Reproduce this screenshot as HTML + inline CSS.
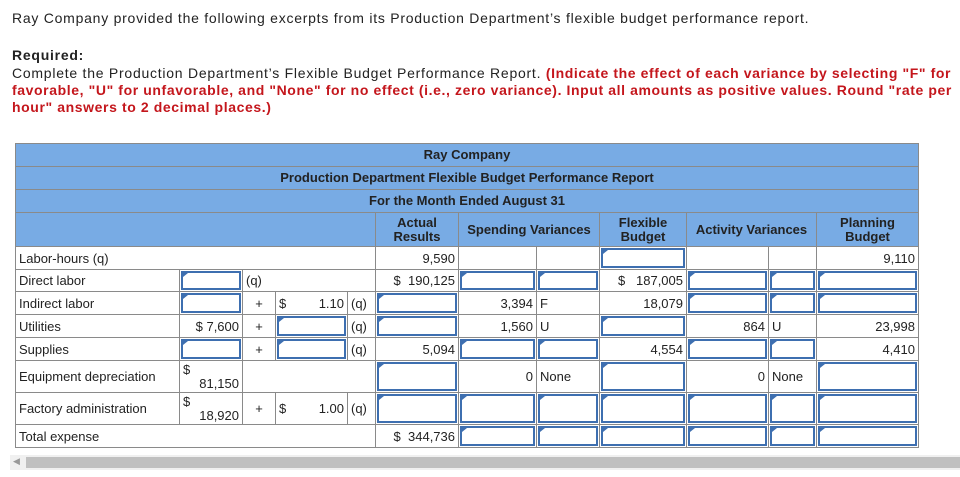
<!DOCTYPE html>
<html><head><meta charset="utf-8"><style>
body{margin:0;width:960px;height:477px;background:#fff;font-family:"Liberation Sans",Arial,sans-serif;color:#222;position:relative;overflow:hidden}
.t{position:absolute;left:12px;font-size:14px;line-height:17px;white-space:nowrap;letter-spacing:0.75px}
.r{color:#c4161c;font-weight:bold;letter-spacing:0.6px}
table{position:absolute;left:15px;top:143px;border-collapse:collapse;table-layout:fixed;font-size:13px}
td{border:1px solid #8a8a8a;padding:0 3px;white-space:nowrap;overflow:hidden;position:relative}
.h td{background:#78abe4;font-weight:bold;text-align:center;line-height:14px}
.n{text-align:right}
.i{padding:0}
.i div{position:absolute;left:1px;top:1px;right:1px;bottom:1px;border:2px solid #3e6fb0;box-sizing:border-box}
.i div:before{content:"";position:absolute;left:0;top:0;border-left:5px solid #3e6fb0;border-bottom:4px solid transparent}
.sb{position:absolute;left:10px;top:455px;width:950px;height:15px;background:#f0f0f0}
.sb div{position:absolute;left:16px;top:2px;right:0;height:11px;background:#c0c0c0}
</style></head><body>
<div class="t" style="top:10px">Ray Company provided the following excerpts from its Production Department’s flexible budget performance report.</div>
<div class="t" style="top:47px;font-weight:bold">Required:</div>
<div class="t" style="top:65px">Complete the Production Department’s Flexible Budget Performance Report. <span class="r">(Indicate the effect of each variance by selecting "F" for</span></div>
<div class="t r" style="top:82px">favorable, "U" for unfavorable, and "None" for no effect (i.e., zero variance). Input all amounts as positive values. Round "rate per</div>
<div class="t r" style="top:99px">hour" answers to 2 decimal places.)</div>
<table>
<colgroup><col style="width:164px"><col style="width:63px"><col style="width:33px"><col style="width:72px"><col style="width:28px"><col style="width:83px"><col style="width:78px"><col style="width:63px"><col style="width:87px"><col style="width:82px"><col style="width:48px"><col style="width:102px"></colgroup>
<tr class="h" style="height:23px"><td colspan="12">Ray Company</td></tr>
<tr class="h" style="height:23px"><td colspan="12">Production Department Flexible Budget Performance Report</td></tr>
<tr class="h" style="height:23px"><td colspan="12">For the Month Ended August 31</td></tr>
<tr class="h" style="height:34px"><td colspan="5"></td><td>Actual<br>Results</td><td colspan="2">Spending Variances</td><td>Flexible<br>Budget</td><td colspan="2">Activity Variances</td><td>Planning<br>Budget</td></tr>
<tr style="height:23px"><td colspan="5">Labor-hours (q)</td><td class="n">9,590</td><td></td><td></td><td class="i"><div></div></td><td></td><td></td><td class="n">9,110</td></tr>
<tr style="height:22px"><td>Direct labor</td><td class="i"><div></div></td><td colspan="3">(q)</td><td class="n">$&nbsp;&nbsp;190,125</td><td class="i"><div></div></td><td class="i"><div></div></td><td class="n">$&nbsp;&nbsp;&nbsp;187,005</td><td class="i"><div></div></td><td class="i"><div></div></td><td class="i"><div></div></td></tr>
<tr style="height:23px"><td>Indirect labor</td><td class="i"><div></div></td><td style="text-align:center">+</td><td>$<span style="float:right">1.10</span></td><td>(q)</td><td class="i"><div></div></td><td class="n">3,394</td><td>F</td><td class="n">18,079</td><td class="i"><div></div></td><td class="i"><div></div></td><td class="i"><div></div></td></tr>
<tr style="height:23px"><td>Utilities</td><td class="n">$ 7,600</td><td style="text-align:center">+</td><td class="i"><div></div></td><td>(q)</td><td class="i"><div></div></td><td class="n">1,560</td><td>U</td><td class="i"><div></div></td><td class="n">864</td><td>U</td><td class="n">23,998</td></tr>
<tr style="height:23px"><td>Supplies</td><td class="i"><div></div></td><td style="text-align:center">+</td><td class="i"><div></div></td><td>(q)</td><td class="n">5,094</td><td class="i"><div></div></td><td class="i"><div></div></td><td class="n">4,554</td><td class="i"><div></div></td><td class="i"><div></div></td><td class="n">4,410</td></tr>
<tr style="height:32px"><td>Equipment depreciation</td><td style="line-height:14px">$<br><span style="float:right">81,150</span></td><td colspan="3"></td><td class="i"><div></div></td><td class="n">0</td><td>None</td><td class="i"><div></div></td><td class="n">0</td><td>None</td><td class="i"><div></div></td></tr>
<tr style="height:32px"><td>Factory administration</td><td style="line-height:14px">$<br><span style="float:right">18,920</span></td><td style="text-align:center">+</td><td>$<span style="float:right">1.00</span></td><td>(q)</td><td class="i"><div></div></td><td class="i"><div></div></td><td class="i"><div></div></td><td class="i"><div></div></td><td class="i"><div></div></td><td class="i"><div></div></td><td class="i"><div></div></td></tr>
<tr style="height:23px"><td colspan="5">Total expense</td><td class="n">$&nbsp;&nbsp;344,736</td><td class="i"><div></div></td><td class="i"><div></div></td><td class="i"><div></div></td><td class="i"><div></div></td><td class="i"><div></div></td><td class="i"><div></div></td></tr>
</table>
<div class="sb"><div></div><span style="position:absolute;left:3px;top:1px;font-size:9px;color:#999">◀</span></div>
</body></html>
